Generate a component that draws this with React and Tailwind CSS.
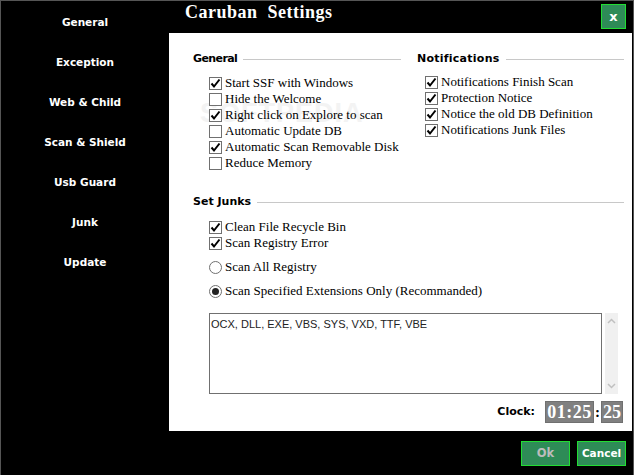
import React from "react";

const comic = "font-['Comic_Sans_MS','DejaVu_Sans',sans-serif] font-bold";
const serif = "font-['Liberation_Serif',serif]";

const navItems = ["General", "Exception", "Web & Child", "Scan & Shield", "Usb Guard", "Junk", "Update"];

const generalOptions = [
  ["Start SSF with Windows", true],
  ["Hide the Welcome", false],
  ["Right click on Explore to scan", true],
  ["Automatic Update DB", false],
  ["Automatic Scan Removable Disk", true],
  ["Reduce Memory", false],
];

const notifyOptions = [
  ["Notifications Finish Scan", true],
  ["Protection Notice", true],
  ["Notice the old DB Definition", true],
  ["Notifications Junk Files", true],
];

const junkOptions = [
  ["Clean File Recycle Bin", true],
  ["Scan Registry Error", true],
];

function Check({ label, checked }) {
  return (
    <div className="flex h-4 items-center gap-[3px]">
      <span className="flex h-[13px] w-[13px] shrink-0 items-center justify-center border border-[#707070] bg-white">
        {checked && (
          <svg width="11" height="11" viewBox="0 0 11 11">
            <path d="M1.5 5.5 L4 8.5 L9.5 1.5" fill="none" stroke="#000" strokeWidth="2" />
          </svg>
        )}
      </span>
      <span className={`${serif} whitespace-nowrap text-[13px] leading-4 text-black`}>{label}</span>
    </div>
  );
}

function Radio({ label, checked }) {
  return (
    <div className="flex h-4 items-center gap-[3px]">
      <span className="flex h-[13px] w-[13px] shrink-0 items-center justify-center rounded-full border border-[#707070] bg-white">
        {checked && <span className="h-[7px] w-[7px] rounded-full bg-[#222]" />}
      </span>
      <span className={`${serif} whitespace-nowrap text-[13px] leading-4 text-black`}>{label}</span>
    </div>
  );
}

function Heading({ children, className }) {
  return (
    <div className="flex h-4 items-center gap-[6px]">
      <span className={`${comic} whitespace-nowrap text-[11px] leading-4 text-black ${className}`}>{children}</span>
      <span className="h-px flex-1 bg-[#c8c8c8]" />
    </div>
  );
}

function GreenButton({ children, className }) {
  return (
    <div className={`flex items-center justify-center border border-[#22dd33] bg-[#2e8b57] ${comic} ${className}`}>
      {children}
    </div>
  );
}

export default function App() {
  return (
    <div className="flex h-[475px] w-[634px] overflow-hidden border-x border-t border-[#555] bg-black">
      {/* Sidebar */}
      <div className="flex w-[168px] shrink-0 flex-col items-center gap-6 pt-[13px]">
        {navItems.map((item) => (
          <div key={item} className={`${comic} h-4 whitespace-nowrap text-[10.5px] leading-4 text-white`}>
            {item}
          </div>
        ))}
      </div>

      <div className="flex min-w-0 flex-1 flex-col">
        {/* Title */}
        <div className="flex h-[32px] items-start justify-between pl-[16px] pr-[7px]">
          <div className={`${serif} whitespace-pre pt-[1px] text-[18px] font-bold leading-5 tracking-[0.5px] text-white`}>
            Caruban  Settings
          </div>
          <GreenButton className="mt-[3px] h-[25px] w-[25px] text-[13px] text-white">x</GreenButton>
        </div>

        {/* Content */}
        <div className="relative isolate h-[398px] w-[463px] bg-white pl-[24px] pr-[8px] pt-[18px]">
          <div className="flex gap-[16px]">
            <div className="w-[208px]">
              <Heading className="tracking-[-0.6px]">General</Heading>
              <div className="mt-[8px] ml-[16px]">
                {generalOptions.map(([label, checked]) => (
                  <Check key={label} label={label} checked={checked} />
                ))}
              </div>
            </div>
            <div className="flex-1">
              <Heading className="tracking-[0.25px]">Notifications</Heading>
              <div className="mt-[7px] ml-[8px]">
                {notifyOptions.map(([label, checked]) => (
                  <Check key={label} label={label} checked={checked} />
                ))}
              </div>
            </div>
          </div>

          <div className="mt-[23px]">
            <Heading>Set Junks</Heading>
          </div>
          <div className="mt-[9px] ml-[16px]">
            {junkOptions.map(([label, checked]) => (
              <Check key={label} label={label} checked={checked} />
            ))}
            <div className="mt-[8px]">
              <Radio label="Scan All Registry" />
            </div>
            <div className="mt-[8px]">
              <Radio label="Scan Specified Extensions Only (Recommanded)" checked />
            </div>

            {/* Extensions box */}
            <div className="mt-[14px] flex h-[81px] w-[409px] gap-[3px] bg-white">
              <div className="flex-1 border border-[#707070] pl-[1px] pt-[3px] font-['Liberation_Sans',sans-serif] text-[11px] leading-[14px] text-[#222]">
                OCX, DLL, EXE, VBS, SYS, VXD, TTF, VBE
              </div>
              <div className="flex w-[13px] flex-col items-center justify-between bg-[#f0f0f0] py-[5px]">
                <svg width="9" height="6" viewBox="0 0 9 6">
                  <path d="M1 5 L4.5 1.5 L8 5" fill="none" stroke="#c0c0c0" strokeWidth="1.5" />
                </svg>
                <svg width="9" height="6" viewBox="0 0 9 6">
                  <path d="M1 1 L4.5 4.5 L8 1" fill="none" stroke="#c0c0c0" strokeWidth="1.5" />
                </svg>
              </div>
            </div>
          </div>

          {/* Clock */}
          <div className="mt-[7px] flex items-center justify-end pr-[1px]">
            <span className={`${comic} mr-[10px] text-[11px] text-black`}>Clock:</span>
            <span className={`${serif} flex h-[22px] w-[49px] items-center justify-center border border-[#707070] bg-[#808080] text-[18px] font-bold tracking-[0.5px] text-white`}>
              01:25
            </span>
            <span className={`${serif} w-[7px] text-center text-[15px] font-bold text-black`}>:</span>
            <span className={`${serif} flex h-[22px] w-[22px] items-center justify-center border border-[#707070] bg-[#808080] text-[18px] font-bold text-white`}>
              25
            </span>
          </div>

          {/* Watermark, sits behind the options */}
          <div className="pointer-events-none absolute left-[31px] top-[66px] z-[-1] font-['Liberation_Sans',sans-serif] text-[27px] font-bold leading-7 tracking-[1px] text-[#f3f3f3]">
            SOFTPEDIA
          </div>
        </div>

        {/* Footer */}
        <div className="flex flex-1 items-start justify-end gap-[7px] pr-[7px] pt-[10px]">
          <GreenButton className="h-[25px] w-[49px] text-[11.5px] text-[#bcbcbc]">Ok</GreenButton>
          <GreenButton className="h-[25px] w-[49px] text-[10.5px] text-white">Cancel</GreenButton>
        </div>
      </div>
    </div>
  );
}
